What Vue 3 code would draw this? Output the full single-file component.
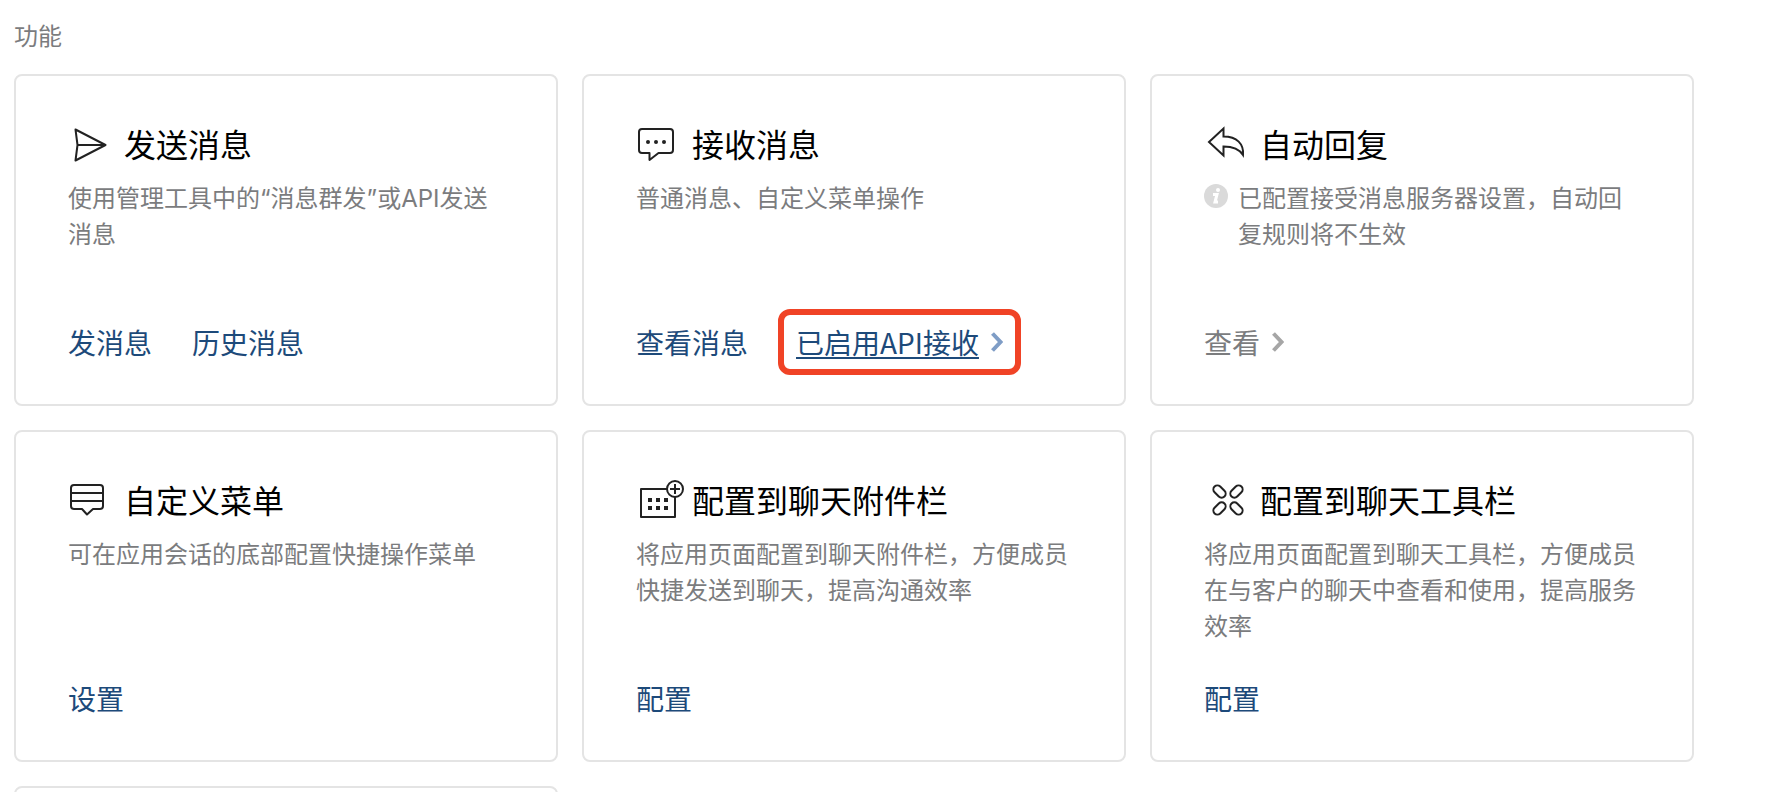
<template>
  <main class="page">
    <h1 class="page-title">功能</h1>

    <div class="card-grid">
      <section v-for="card in cards" :key="card.icon" class="card">
        <h2 class="card-title">
          <svg class="card-icon" viewBox="0 -2 56 48" aria-hidden="true">
            <path v-if="card.icon === 'send'" d="M7.5 8.5 37.5 24 7.5 39.5 9.5 24ZM9.5 24H37.5" />
            <template v-else-if="card.icon === 'receive'">
              <path d="M6 8H34Q37 8 37 11V29Q37 32 34 32H22.5L13.5 39V32H6Q3 32 3 29V11Q3 8 6 8Z" />
              <g class="solid">
                <circle cx="12" cy="21" r="2" />
                <circle cx="20" cy="21" r="2" />
                <circle cx="28" cy="21" r="2" />
              </g>
            </template>
            <path v-else-if="card.icon === 'reply'" stroke-linejoin="miter" d="M5 21 19.5 7.5V15.5C33 15.5 40 23 39 34C35 27.5 29 25.5 19.5 25.5V34.5Z" />
            <path v-else-if="card.icon === 'menu'" d="M6 8H32Q35 8 35 11V29Q35 32 32 32H25L19 37.5 14 32H6Q3 32 3 29V11Q3 8 6 8ZM3 16H35M3 24H35" />
            <template v-else-if="card.icon === 'attach'">
              <rect x="5" y="12" width="34" height="28" />
              <g class="solid">
                <rect x="12" y="21" width="4" height="4" />
                <rect x="20" y="21" width="4" height="4" />
                <rect x="28" y="21" width="4" height="4" />
                <rect x="12" y="29" width="4" height="4" />
                <rect x="20" y="29" width="4" height="4" />
                <rect x="28" y="29" width="4" height="4" />
              </g>
              <circle class="plate" cx="39" cy="12" r="8" />
              <path d="M34 12H44M39 7V17" />
            </template>
            <g v-else-if="card.icon === 'tools'">
              <rect v-for="angle in [45, 135, 225, 315]" :key="angle" x="29" y="19" width="14" height="8" rx="4" :transform="`rotate(${angle} 24 23)`" />
            </g>
          </svg>
          {{ card.title }}
        </h2>

        <div class="card-desc">
          <svg v-if="card.notice" class="info-icon" viewBox="0 0 24 24" aria-hidden="true">
            <circle cx="12" cy="12" r="12" fill="#dadada" />
            <circle cx="14" cy="6" r="2" fill="#fff" />
            <path d="M9 10.5H13L11 18H14" fill="none" stroke="#fff" stroke-width="3" />
          </svg>
          <p>{{ card.desc }}</p>
        </div>

        <div class="card-links">
          <a
            v-for="link in card.links"
            :key="link.text"
            href="#"
            class="link"
            :class="{ 'is-muted': link.muted, 'is-marked': link.marked }"
          >
            <span class="link-text">{{ link.text }}</span>
            <svg v-if="link.arrow" class="arrow" viewBox="0 0 12 20" aria-hidden="true">
              <path d="M1.5 1.5 9.5 10 1.5 18.5" />
            </svg>
          </a>
        </div>
      </section>
      <section class="card"></section>
    </div>
  </main>
</template>

<script setup>
const cards = [
  {
    icon: 'send',
    title: '发送消息',
    desc: '使用管理工具中的“消息群发”或API发送消息',
    links: [{ text: '发消息' }, { text: '历史消息' }]
  },
  {
    icon: 'receive',
    title: '接收消息',
    desc: '普通消息、自定义菜单操作',
    links: [{ text: '查看消息' }, { text: '已启用API接收', arrow: true, marked: true }]
  },
  {
    icon: 'reply',
    title: '自动回复',
    desc: '已配置接受消息服务器设置，自动回复规则将不生效',
    notice: true,
    links: [{ text: '查看', arrow: true, muted: true }]
  },
  {
    icon: 'menu',
    title: '自定义菜单',
    desc: '可在应用会话的底部配置快捷操作菜单',
    links: [{ text: '设置' }]
  },
  {
    icon: 'attach',
    title: '配置到聊天附件栏',
    desc: '将应用页面配置到聊天附件栏，方便成员快捷发送到聊天，提高沟通效率',
    links: [{ text: '配置' }]
  },
  {
    icon: 'tools',
    title: '配置到聊天工具栏',
    desc: '将应用页面配置到聊天工具栏，方便成员在与客户的聊天中查看和使用，提高服务效率',
    links: [{ text: '配置' }]
  }
]
</script>

<style>
body { background: #fff; }
</style>

<style scoped>
*, *::before, *::after { box-sizing: border-box; margin: 0; padding: 0; }

.page {
  --c-border: #e4e4e4;
  --c-link:   #1d4a7a;
  --c-txt-s:  #7b7c7e;
  --c-mark:   #f04326;
  height: 100vh;
  overflow: hidden;
  padding: 17px 80px 0 14px;
  font-family: 'Noto Sans CJK SC', sans-serif;
  color: #000;
}

.page-title {
  margin-bottom: 21px;
  font-size: 24px;
  font-weight: 400;
  line-height: 36px;
  color: var(--c-txt-s);
}

/* ── 卡片 ── */
.card-grid {
  display: grid;
  grid-template-columns: repeat(3, minmax(0, 1fr));
  gap: 24px;
}

.card {
  display: flex;
  flex-direction: column;
  min-height: 332px;
  padding: 43px 52px 42px;
  border: 2px solid var(--c-border);
  border-radius: 8px;
}

.card-title {
  display: flex;
  align-items: center;
  font-size: 32px;
  font-weight: 400;
  line-height: 48px;
}

.card-icon {
  flex: none;
  width: 56px;
  height: 48px;
  fill: none;
  stroke: #222;
  stroke-width: 2;
  stroke-linejoin: round;
}
.card-icon .solid { fill: #222; stroke: none; }
.card-icon .plate { fill: #fff; }

.card-desc {
  display: flex;
  gap: 10px;
  margin-top: 14px;
  font-family: Inter, 'Noto Sans CJK SC', sans-serif;
  font-size: 24px;
  line-height: 36px;
  color: var(--c-txt-s);
}

.info-icon { flex: none; width: 24px; height: 24px; margin-top: 3px; }

/* ── 底部链接 ── */
.card-links {
  display: flex;
  gap: 40px;
  margin-top: auto;
}

.link {
  position: relative;
  display: flex;
  align-items: center;
  gap: 12px;
  font-size: 28px;
  line-height: 40px;
  color: var(--c-link);
  text-decoration: none;
}

.arrow {
  width: 12px;
  height: 20px;
  fill: none;
  stroke: #7f9dc6;
  stroke-width: 4;
}

.is-muted { color: var(--c-txt-s); }
.is-muted .arrow { stroke: #a6a6a6; }

.is-marked { margin-left: 8px; }
.is-marked .link-text {
  text-decoration: underline;
  text-decoration-thickness: 2px;
  text-underline-offset: 3px;
  text-decoration-skip-ink: none;
}
.is-marked::after {
  content: '';
  position: absolute;
  inset: -13px -18px;
  border: 6px solid var(--c-mark);
  border-radius: 12px;
}
</style>
